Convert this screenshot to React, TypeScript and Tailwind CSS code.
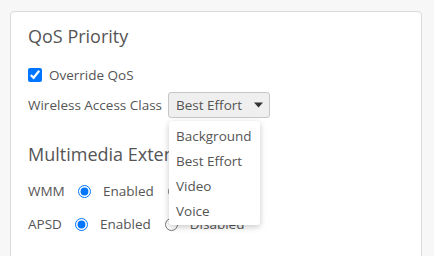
import React from "react";

function Radio({ checked }: { checked: boolean }) {
  return (
    <input
      type="radio"
      checked={checked}
      readOnly
      className="m-0 h-[13px] w-[13px] shrink-0"
    />
  );
}

export default function App() {
  return (
    <div
      className="h-[256px] w-[434px] overflow-hidden bg-[#f7f7f7] pl-[10px] pr-[12px] pt-[11px] text-[#555]"
      style={{ fontFamily: '"Open Sans", sans-serif' }}
    >
      <div className="relative h-[260px] rounded-[4px] border border-[#dadada] bg-white pl-[17px] pt-[10px] text-[13.5px]">
        <div className="text-[18px] leading-[28px]">QoS Priority</div>

        <div className="mt-[15px] flex h-[20px] items-center leading-[20px]">
          <input type="checkbox" checked readOnly className="m-0 h-[14px] w-[14px] shrink-0" />
          <span className="ml-[7px]">Override QoS</span>
        </div>

        <div className="mt-[7px] flex h-[26px] items-center leading-[20px]">
          <span className="w-[140px] shrink-0">Wireless Access Class</span>
          <div className="flex h-[26px] w-[102px] items-center justify-between rounded-[3px] border border-[#c6c6c6] bg-[#efefef] pl-[7px] pr-[6px]">
            <span>Best Effort</span>
            <svg width="9" height="6" viewBox="0 0 9 6">
              <path d="M0 0.5 L9 0.5 L4.5 5.5 Z" fill="#333" />
            </svg>
          </div>
        </div>

        <div className="mt-[22px] text-[18px] leading-[28px]">Multimedia Extensions</div>

        <div className="mt-[13px] flex h-[20px] items-center leading-[20px]">
          <span className="w-[50px] shrink-0">WMM</span>
          <Radio checked />
          <span className="ml-[12px]">Enabled</span>
          <span className="ml-[14px] flex"><Radio checked={false} /></span>
          <span className="ml-[12px]">Disabled</span>
        </div>

        <div className="mt-[13px] flex h-[20px] items-center leading-[20px]">
          <span className="w-[47px] shrink-0">APSD</span>
          <Radio checked />
          <span className="ml-[12px]">Enabled</span>
          <span className="ml-[14px] flex"><Radio checked={false} /></span>
          <span className="ml-[12px]">Disabled</span>
        </div>

        <div className="absolute left-[158px] top-[109px] w-[91px] rounded-[3px] bg-white py-[2px] shadow-[0_2px_6px_rgba(0,0,0,0.22)]">
          {["Background", "Best Effort", "Video", "Voice"].map((t) => (
            <div key={t} className="flex h-[25px] items-center pl-[7px] leading-[20px]">
              {t}
            </div>
          ))}
        </div>
      </div>
    </div>
  );
}
